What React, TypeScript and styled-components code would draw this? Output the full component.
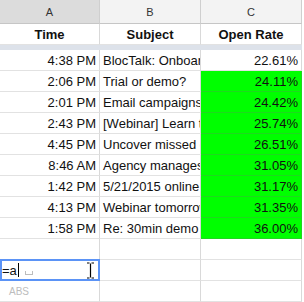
import React from 'react';
import styled, { createGlobalStyle } from 'styled-components';

const GlobalStyle = createGlobalStyle`
  html, body {
    margin: 0;
    padding: 0;
    background: #fff;
  }
  body {
    font-family: 'Liberation Sans', Arial, sans-serif;
    overflow: hidden;
  }
`;

const rows = [
  { time: '4:38 PM', subject: 'BlocTalk: Onboarding tips', rate: '22.61%', hit: false },
  { time: '2:06 PM', subject: 'Trial or demo?', rate: '24.11%', hit: true },
  { time: '2:01 PM', subject: 'Email campaigns that convert', rate: '24.42%', hit: true },
  { time: '2:43 PM', subject: '[Webinar] Learn the basics', rate: '25.74%', hit: true },
  { time: '4:45 PM', subject: 'Uncover missed  opportunities', rate: '26.51%', hit: true },
  { time: '8:46 AM', subject: 'Agency manages ads', rate: '31.05%', hit: true },
  { time: '1:42 PM', subject: '5/21/2015 online training', rate: '31.17%', hit: true },
  { time: '4:13 PM', subject: 'Webinar tomorrow', rate: '31.35%', hit: true },
  { time: '1:58 PM', subject: 'Re: 30min demo call', rate: '36.00%', hit: true },
];

export default function App() {
  return (
    <>
      <GlobalStyle />
      <Sheet>
        <ColHead $active>A</ColHead>
        <ColHead>B</ColHead>
        <ColHead>C</ColHead>

        <TitleCell>Time</TitleCell>
        <TitleCell>Subject</TitleCell>
        <TitleCell>Open Rate</TitleCell>

        <FrozenBar />

        {rows.map((r) => (
          <React.Fragment key={r.time + r.rate}>
            <Cell $align="right">{r.time}</Cell>
            <Cell $align="left">{r.subject}</Cell>
            <Cell $align="right" $hit={r.hit}>{r.rate}</Cell>
          </React.Fragment>
        ))}

        <Cell />
        <Cell />
        <Cell />

        <Cell>
          <EditBox>
            <EditText>=a</EditText>
            <Caret />
            <SpaceMark />
            <IBeam width="9" height="17" viewBox="0 0 9 17">
              <path d="M1 1h2.5M5.5 1H8M4.5 1.5v14M1 16h2.5M5.5 16H8" stroke="#fff" strokeWidth="3" fill="none" />
              <path d="M1 1h2.5M5.5 1H8M4.5 1.5v14M1 16h2.5M5.5 16H8" stroke="#000" strokeWidth="1.2" fill="none" />
            </IBeam>
          </EditBox>
        </Cell>
        <Cell />
        <Cell />

        <Cell>
          <Suggest>ABS</Suggest>
        </Cell>
        <Cell />
        <Cell />
      </Sheet>
    </>
  );
}

const Sheet = styled.div`
  display: grid;
  grid-template-columns: 100px 101px 101px;
  grid-template-rows: 24px 21px 5px repeat(12, 21px);
  width: 304px;
  height: 302px;
  overflow: hidden;
`;

const ColHead = styled.div<{ $active?: boolean }>`
  display: flex;
  align-items: center;
  justify-content: center;
  background: ${(p) => (p.$active ? '#dcdcdc' : '#f3f3f3')};
  border-right: 1px solid #cfcfcf;
  border-bottom: 1px solid #c6c6c6;
  color: #333;
  font-size: 11px;
  box-sizing: border-box;
`;

const TitleCell = styled.div`
  display: flex;
  align-items: center;
  justify-content: center;
  border-right: 1px solid #d9d9d9;
  border-bottom: 1px solid #e2e2e2;
  font-weight: bold;
  font-size: 13px;
  color: #111;
  box-sizing: border-box;
  white-space: nowrap;
  overflow: hidden;
`;

const FrozenBar = styled.div`
  grid-column: 1 / -1;
  background: #dde2ea;
`;

const Cell = styled.div<{ $align?: 'left' | 'right'; $hit?: boolean }>`
  position: relative;
  display: flex;
  align-items: center;
  justify-content: ${(p) => (p.$align === 'right' ? 'flex-end' : 'flex-start')};
  padding: 0 3px;
  background: ${(p) => (p.$hit ? '#00ff00' : '#fff')};
  border-right: 1px solid ${(p) => (p.$hit ? '#1fd81f' : '#d9d9d9')};
  border-bottom: 1px solid ${(p) => (p.$hit ? '#1fd81f' : '#e2e2e2')};
  font-size: 13px;
  color: #111;
  box-sizing: border-box;
  white-space: nowrap;
  overflow: ${(p) => (p.$align ? 'hidden' : 'visible')};
`;

const EditBox = styled.div`
  position: absolute;
  top: -1px;
  bottom: -1px;
  left: 0;
  right: -1px;
  display: flex;
  align-items: center;
  border: 2px solid #5b93f6;
  background: #fff;
  box-sizing: border-box;
  z-index: 2;
`;

const EditText = styled.span`
  font-size: 13px;
  color: #111;
`;

const Caret = styled.span`
  width: 1px;
  height: 14px;
  margin-left: 1px;
  background: #000;
`;

const SpaceMark = styled.span`
  width: 6px;
  height: 3px;
  margin-left: 6px;
  margin-top: 6px;
  border: 1px solid #bdbdbd;
  border-top: none;
`;

const IBeam = styled.svg`
  position: absolute;
  left: 84px;
  top: 1px;
`;

const Suggest = styled.span`
  padding-left: 6px;
  font-size: 10px;
  color: #bdbdbd;
`;
